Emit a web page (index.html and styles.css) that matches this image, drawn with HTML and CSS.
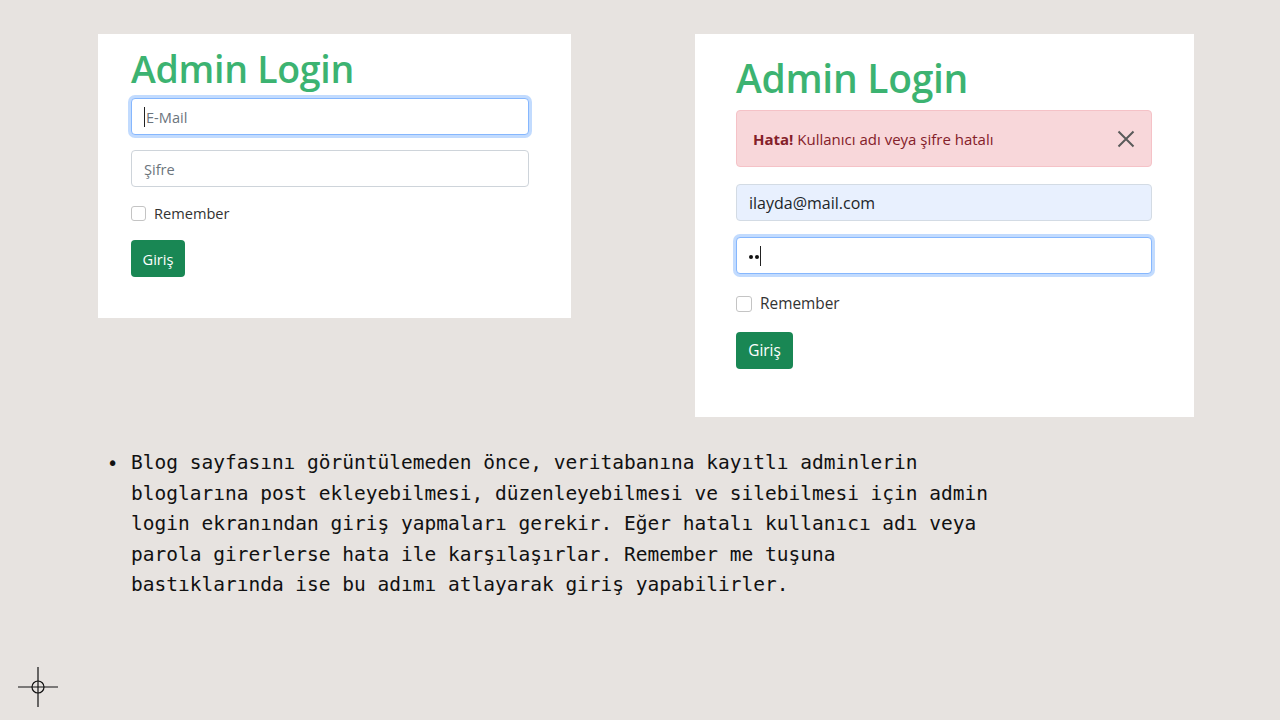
FILE: index.html
```html
<!DOCTYPE html>
<html lang="tr">
<head>
<meta charset="utf-8">
<title>Admin Login</title>
<link rel="stylesheet" href="styles.css">
</head>
<body>
<div class="slide">
  <div class="shots">
    <div class="card card-left">
      <h1 class="title">Admin Login</h1>
      <div class="field focused"><span class="caret"></span><span class="ph">E-Mail</span></div>
      <div class="field"><span class="ph">Şifre</span></div>
      <div class="check"><span class="box"></span><span>Remember</span></div>
      <div class="btn">Giriş</div>
    </div>
    <div class="card card-right">
      <h1 class="title">Admin Login</h1>
      <div class="alert">
        <span><b>Hata!</b> Kullanıcı adı veya şifre hatalı</span>
        <svg class="close" width="18" height="18" viewBox="0 0 18 18"><path d="M1.5 1.5 L16.5 16.5 M16.5 1.5 L1.5 16.5" stroke="#5a5a5a" stroke-width="2" fill="none"/></svg>
      </div>
      <div class="field autofill"><span class="val">ilayda@mail.com</span></div>
      <div class="field focused"><span class="dot"></span><span class="dot"></span><span class="caret"></span></div>
      <div class="check"><span class="box"></span><span>Remember</span></div>
      <div class="btn">Giriş</div>
    </div>
  </div>
  <div class="notes">
    <span class="bullet">•</span>
    <p class="text">Blog sayfasını görüntülemeden önce, veritabanına kayıtlı adminlerin<br>bloglarına post ekleyebilmesi, düzenleyebilmesi ve silebilmesi için admin<br>login ekranından giriş yapmaları gerekir. Eğer hatalı kullanıcı adı veya<br>parola girerlerse hata ile karşılaşırlar. Remember me tuşuna<br>bastıklarında ise bu adımı atlayarak giriş yapabilirler.</p>
  </div>
  <svg class="marker" width="40" height="40" viewBox="0 0 40 40"><path d="M0 20 H40 M20 0 V40" stroke="#111" stroke-width="1.2"/><circle cx="20" cy="20" r="6" stroke="#111" stroke-width="1.2" fill="none"/></svg>
</div>
</body>
</html>
```

FILE: styles.css
```css
html, body {
  margin: 0;
  padding: 0;
}
body {
  background: #e7e3e0;
}
.slide {
  position: relative;
  width: 1280px;
  height: 720px;
  overflow: hidden;
  background: #e7e3e0;
}
.shots {
  display: flex;
  align-items: flex-start;
  gap: 124px;
  padding: 34px 0 0 98px;
}
.card {
  background: #fff;
  box-sizing: border-box;
  display: flex;
  flex-direction: column;
  align-items: flex-start;
  font-family: "Open Sans", "Noto Sans", sans-serif;
  color: #212529;
}
.card-left {
  width: 473px;
  height: 284px;
  padding: 0 42px 0 33px;
  font-size: 14.6px;
}
.card-right {
  width: 499px;
  height: 383px;
  padding: 0 42px 0 41px;
  font-size: 15.4px;
}
.title {
  margin: 0;
  font-weight: 600;
  color: #3cb371;
  letter-spacing: -0.3px;
}
.card-left .title {
  font-size: 37.5px;
  line-height: 44px;
  margin: 13px 0 7px;
}
.card-right .title {
  font-size: 39px;
  line-height: 46px;
  margin: 21px 0 9px;
}
.field {
  align-self: stretch;
  box-sizing: border-box;
  height: 37px;
  border: 1px solid #ced4da;
  border-radius: 4px;
  background: #fff;
  display: flex;
  align-items: center;
  padding: 0 12px;
}
.field.focused {
  border-color: #86b7fe;
  box-shadow: 0 0 0 3px rgba(13, 110, 253, 0.25);
}
.field.autofill {
  background: #e8f0fe;
  border-color: #d3dbe4;
}
.card-right .field {
  font-size: 16px;
}
.card-left .field + .field {
  margin-top: 15px;
}
.card-right .field + .field {
  margin-top: 16px;
}
.ph {
  color: #6c757d;
}
.caret {
  display: inline-block;
  width: 1px;
  height: 20px;
  background: #222;
}
.card-left .caret {
  margin-right: 1px;
}
.dot {
  display: inline-block;
  width: 4px;
  height: 4px;
  border-radius: 50%;
  background: #111;
  margin-right: 2px;
  margin-top: 2px;
}
.dot + .dot {
  margin-right: 1px;
}
.check {
  display: flex;
  align-items: center;
  gap: 8px;
  color: #333;
}
.card-left .check {
  margin-top: 16px;
}
.card-right .check {
  margin-top: 19px;
}
.box {
  display: inline-block;
  box-sizing: border-box;
  width: 15px;
  height: 15px;
  border: 1px solid #c4c4c4;
  border-radius: 3px;
  background: #fff;
}
.card-right .box {
  width: 16px;
  height: 16px;
}
.btn {
  box-sizing: border-box;
  height: 37px;
  padding: 0 6px;
  background: #198754;
  color: #fff;
  border-radius: 4px;
  display: flex;
  align-items: center;
  justify-content: center;
}
.card-left .btn {
  margin-top: 17px;
  width: 54px;
}
.card-right .btn {
  margin-top: 18px;
  width: 57px;
}
.alert {
  align-self: stretch;
  box-sizing: border-box;
  height: 57px;
  margin-bottom: 17px;
  padding: 0 16px 0 16px;
  background: #f8d7da;
  border: 1px solid #f5c2c7;
  border-radius: 4px;
  color: #842029;
  display: flex;
  align-items: center;
  justify-content: space-between;
  font-size: 15px;
}
.alert b {
  font-weight: 700;
}
.notes {
  display: flex;
  margin: 31px 0 0 107px;
  font-family: "DejaVu Sans Mono", "Liberation Mono", monospace;
  font-size: 19.5px;
  line-height: 30.5px;
  color: #111;
}
.bullet {
  width: 24px;
  flex: none;
  font-family: "DejaVu Sans", sans-serif;
  font-size: 19px;
  line-height: 30.5px;
}
.text {
  margin: 0;
}
.marker {
  position: absolute;
  left: 18px;
  top: 667px;
}
```
